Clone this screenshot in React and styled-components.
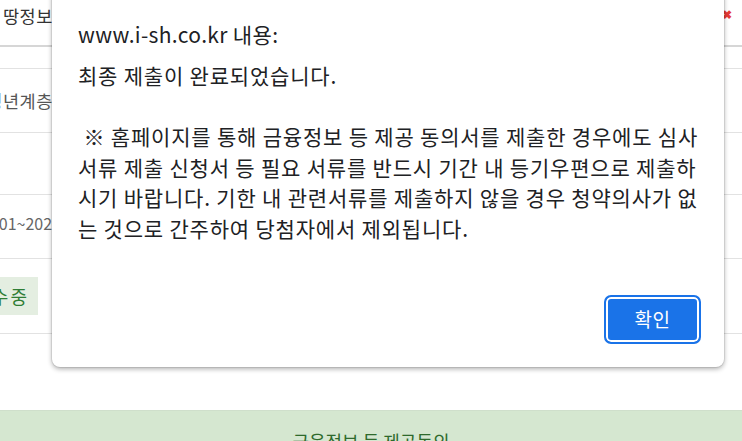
import React from "react";
import styled, { createGlobalStyle } from "styled-components";

const Global = createGlobalStyle`
  html, body { margin: 0; padding: 0; background: #fff; }
  body { width: 742px; height: 441px; overflow: hidden; font-family: "Noto Sans CJK KR", "Noto Sans", sans-serif; }
  #root { position: relative; width: 742px; height: 441px; overflow: hidden; }
`;

const Page = styled.div`
  display: flex;
  flex-direction: column;
  width: 742px;
  height: 441px;
`;

const Row = styled.div`
  display: flex;
  align-items: center;
  justify-content: space-between;
  height: ${(p) => p.$h}px;
  padding-bottom: ${(p) => p.$pb || 0}px;
  border-bottom: ${(p) => (p.$thick ? "2px solid #d6d6d6" : "1px solid #e2e2e2")};
  box-sizing: border-box;
`;

const Cell = styled.div`
  display: flex;
  justify-content: flex-end;
  align-items: center;
  width: ${(p) => p.$w || 60}px;
  overflow: hidden;
  white-space: nowrap;
  font-size: ${(p) => p.$fs || 17.5}px;
  letter-spacing: ${(p) => (p.$ls !== undefined ? p.$ls : 0.6)}px;
  color: ${(p) => p.$color || "#333"};
`;

const Badge = styled.div`
  display: flex;
  align-items: center;
  justify-content: flex-end;
  width: 38px;
  height: 38px;
  padding-right: 9px;
  box-sizing: border-box;
  background: #e4eee1;
  color: #2f7d35;
  font-size: 18px;
  letter-spacing: 2px;
  overflow: hidden;
  white-space: nowrap;
`;

const RightMark = styled.div`
  width: 20px;
  display: flex;
  justify-content: flex-start;
  align-items: center;
  color: #e53935;
  font-size: 12px;
  font-weight: 700;
  line-height: 1;
  padding-left: 2px;
  margin-top: -3px;
`;

const Spacer = styled.div`
  flex: 1;
`;

const GreenBand = styled.div`
  height: 31px;
  background: #d5e7d0;
  border-top: 1px solid #cfdfcb;
  display: flex;
  justify-content: center;
  align-items: flex-start;
  padding-top: 18px;
  box-sizing: border-box;
  overflow: hidden;
  color: #2e6a2c;
  font-size: 18px;
  line-height: 24px;
  white-space: nowrap;
`;

const Dialog = styled.div`
  position: absolute;
  left: 52px;
  top: -12px;
  width: 672px;
  height: 379px;
  box-sizing: border-box;
  background: #fff;
  border-radius: 8px;
  box-shadow: 0 0 0 1px rgba(0, 0, 0, 0.07), 0 2px 5px rgba(0, 0, 0, 0.32);
  padding: 31px 23px 23px 26px;
  display: flex;
  flex-direction: column;
  color: #202124;
`;

const Title = styled.div`
  font-size: 21px;
  letter-spacing: 0.35px;
  line-height: 30px;
  margin-bottom: 11px;
`;

const Message = styled.div`
  font-size: 21px;
  letter-spacing: 0.8px;
  line-height: 30.6px;
  white-space: nowrap;
  flex: 1;
`;

const Actions = styled.div`
  display: flex;
  justify-content: flex-end;
`;

const Button = styled.button`
  width: 97px;
  height: 49px;
  border-radius: 7px;
  background: #1a73e8;
  color: #fff;
  border: 2px solid #1a73e8;
  box-shadow: inset 0 0 0 2px #fff;
  outline: none;
  font-family: "Noto Sans CJK KR", "Noto Sans", sans-serif;
  font-size: 19px;
  letter-spacing: 0.5px;
  padding: 0 0 2px;
  cursor: pointer;
  &:focus, &:focus-visible { outline: none; }
`;

export default function App() {
  return (
    <>
      <Global />
      <Page>
        <Row $h={47} $pb={14} $thick>
          <Cell $w={53}>땅정보</Cell>
          <RightMark>✖</RightMark>
        </Row>
        <Row $h={22} />
        <Row $h={64}>
          <Cell $w={53} $color="#555">청년계층</Cell>
        </Row>
        <Row $h={62} />
        <Row $h={64} $pb={8}>
          <Cell $w={61} $fs={16} $ls={0} $color="#666">2025.01.01~2025</Cell>
        </Row>
        <Row $h={75}>
          <Badge>접수중</Badge>
        </Row>
        <Spacer />
        <GreenBand>금융정보 등 제공동의</GreenBand>
      </Page>
      <Dialog role="alertdialog">
        <Title>www.i-sh.co.kr 내용:</Title>
        <Message>
          최종 제출이 완료되었습니다.
          <br />
          <br />
          &nbsp;※ 홈페이지를 통해 금융정보 등 제공 동의서를 제출한 경우에도 심사
          <br />
          서류 제출 신청서 등 필요 서류를 반드시 기간 내 등기우편으로 제출하
          <br />
          시기 바랍니다. 기한 내 관련서류를 제출하지 않을 경우 청약의사가 없
          <br />
          는 것으로 간주하여 당첨자에서 제외됩니다.
        </Message>
        <Actions>
          <Button autoFocus>확인</Button>
        </Actions>
      </Dialog>
    </>
  );
}
